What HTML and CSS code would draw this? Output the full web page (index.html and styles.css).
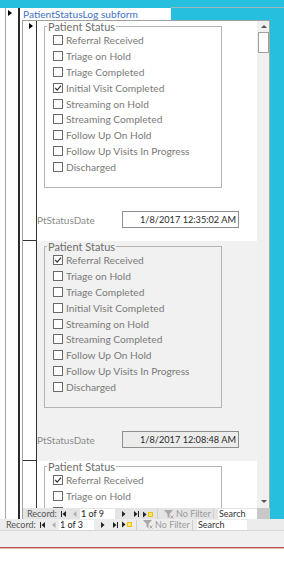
FILE: index.html
```html
<!DOCTYPE html>
<html>
<head>
<meta charset="utf-8">
<title>PatientStatusLog subform</title>
<link rel="stylesheet" href="styles.css">
</head>
<body>
<div class="app">
  <div class="topbar"><div class="topline"></div></div>
  <div class="main">
    <div class="selcol"><div class="selinner"><span class="arrow"></span></div></div>
    <div class="content">
      <div class="caprow"><div class="caption">PatientStatusLog subform</div></div>
      <div class="subform">
        <div class="sfbody">
          <div class="records">
            <div class="record">
              <div class="rsel"><span class="arrow"></span></div>
              <div class="detail">
                <fieldset class="group">
                  <legend>Patient Status</legend>
                  <div class="row"><span class="cb"></span><span>Referral Received</span></div>
                  <div class="row"><span class="cb"></span><span>Triage on Hold</span></div>
                  <div class="row"><span class="cb"></span><span>Triage Completed</span></div>
                  <div class="row"><span class="cb"><svg viewBox="0 0 8 8" width="8" height="8"><polyline points="1.2,4 3.2,6.2 7,1.6" fill="none" stroke="#333" stroke-width="1.2"/></svg></span><span>Initial Visit Completed</span></div>
                  <div class="row"><span class="cb"></span><span>Streaming on Hold</span></div>
                  <div class="row"><span class="cb"></span><span>Streaming Completed</span></div>
                  <div class="row"><span class="cb"></span><span>Follow Up On Hold</span></div>
                  <div class="row"><span class="cb"></span><span>Follow Up Visits In Progress</span></div>
                  <div class="row"><span class="cb"></span><span>Discharged</span></div>
                </fieldset>
                <div class="daterow"><span class="dlabel">PtStatusDate</span><span class="dbox">1/8/2017 12:35:02 AM</span></div>
              </div>
            </div>
            <div class="record">
              <div class="rsel"></div>
              <div class="detail alt">
                <fieldset class="group">
                  <legend>Patient Status</legend>
                  <div class="row"><span class="cb"><svg viewBox="0 0 8 8" width="8" height="8"><polyline points="1.2,4 3.2,6.2 7,1.6" fill="none" stroke="#333" stroke-width="1.2"/></svg></span><span>Referral Received</span></div>
                  <div class="row"><span class="cb"></span><span>Triage on Hold</span></div>
                  <div class="row"><span class="cb"></span><span>Triage Completed</span></div>
                  <div class="row"><span class="cb"></span><span>Initial Visit Completed</span></div>
                  <div class="row"><span class="cb"></span><span>Streaming on Hold</span></div>
                  <div class="row"><span class="cb"></span><span>Streaming Completed</span></div>
                  <div class="row"><span class="cb"></span><span>Follow Up On Hold</span></div>
                  <div class="row"><span class="cb"></span><span>Follow Up Visits In Progress</span></div>
                  <div class="row"><span class="cb"></span><span>Discharged</span></div>
                </fieldset>
                <div class="daterow"><span class="dlabel">PtStatusDate</span><span class="dbox grey">1/8/2017 12:08:48 AM</span></div>
              </div>
            </div>
            <div class="record">
              <div class="rsel"></div>
              <div class="detail">
                <fieldset class="group">
                  <legend>Patient Status</legend>
                  <div class="row"><span class="cb"><svg viewBox="0 0 8 8" width="8" height="8"><polyline points="1.2,4 3.2,6.2 7,1.6" fill="none" stroke="#333" stroke-width="1.2"/></svg></span><span>Referral Received</span></div>
                  <div class="row"><span class="cb"></span><span>Triage on Hold</span></div>
                  <div class="row"><span class="cb"></span><span>Triage Completed</span></div>
                  <div class="row"><span class="cb"></span><span>Initial Visit Completed</span></div>
                  <div class="row"><span class="cb"></span><span>Streaming on Hold</span></div>
                  <div class="row"><span class="cb"></span><span>Streaming Completed</span></div>
                  <div class="row"><span class="cb"></span><span>Follow Up On Hold</span></div>
                  <div class="row"><span class="cb"></span><span>Follow Up Visits In Progress</span></div>
                  <div class="row"><span class="cb"></span><span>Discharged</span></div>
                </fieldset>
                <div class="daterow"><span class="dlabel">PtStatusDate</span><span class="dbox"></span></div>
              </div>
            </div>
          </div>
          <div class="vscroll">
            <div class="sbtn"><span class="tri-up"></span></div>
            <div class="thumb"></div>
            <div class="track"></div>
            <div class="sbtn"><span class="tri-down"></span></div>
          </div>
        </div>
        <div class="navwrap">
          <div class="nav nav-inner">
            <span class="nlabel">Record:</span>
            <span class="ico first"><svg viewBox="0 0 5 6" width="5" height="6"><rect x="0" y="0" width="1" height="6" fill="#222"/><polygon points="5,0 1.5,3 5,6" fill="#222"/></svg></span>
            <span class="ico prev"><svg viewBox="0 0 4 6" width="4" height="6"><polygon points="3.5,0 0,3 3.5,6" fill="#b0b0b0"/></svg></span>
            <span class="nbox">1 of 9</span>
            <span class="ico next"><svg viewBox="0 0 4 6" width="4" height="6"><polygon points="0,0 3.5,3 0,6" fill="#222"/></svg></span>
            <span class="ico last"><svg viewBox="0 0 5 6" width="5" height="6"><polygon points="0,0 3.5,3 0,6" fill="#222"/><rect x="4" y="0" width="1" height="6" fill="#222"/></svg></span>
            <span class="ico new"><svg viewBox="0 0 10 7" width="10" height="7"><polygon points="0,0.5 3.5,3.5 0,6.5" fill="#222"/><rect x="5" y="1" width="5" height="5" fill="#f2c200"/><rect x="6" y="2" width="3" height="3" fill="#ffe680"/></svg></span>
            <span class="nsep"></span>
            <span class="ico funnel"><svg viewBox="0 0 10 9" width="10" height="9"><polygon points="0,0 9,0 5.5,4 5.5,8 3.5,7 3.5,4" fill="#a8a8a8"/><path d="M6.5,5.5 L9.5,8.5 M9.5,5.5 L6.5,8.5" stroke="#c0a0a0" stroke-width="1"/></svg></span>
            <span class="nfilter">No Filter</span>
            <span class="nsep"></span>
            <span class="nsearch">Search</span>
          </div>
          <div class="corner"></div>
        </div>
      </div>
    </div>
    <div class="cyan"></div>
  </div>
  <div class="nav nav-outer">
    <span class="nlabel">Record:</span>
    <span class="ico first"><svg viewBox="0 0 5 6" width="5" height="6"><rect x="0" y="0" width="1" height="6" fill="#222"/><polygon points="5,0 1.5,3 5,6" fill="#222"/></svg></span>
    <span class="ico prev"><svg viewBox="0 0 4 6" width="4" height="6"><polygon points="3.5,0 0,3 3.5,6" fill="#b0b0b0"/></svg></span>
    <span class="nbox">1 of 3</span>
    <span class="ico next"><svg viewBox="0 0 4 6" width="4" height="6"><polygon points="0,0 3.5,3 0,6" fill="#222"/></svg></span>
    <span class="ico last"><svg viewBox="0 0 5 6" width="5" height="6"><polygon points="0,0 3.5,3 0,6" fill="#222"/><rect x="4" y="0" width="1" height="6" fill="#222"/></svg></span>
    <span class="ico new"><svg viewBox="0 0 10 7" width="10" height="7"><polygon points="0,0.5 3.5,3.5 0,6.5" fill="#222"/><rect x="5" y="1" width="5" height="5" fill="#f2c200"/><rect x="6" y="2" width="3" height="3" fill="#ffe680"/></svg></span>
    <span class="nsep"></span>
    <span class="ico funnel"><svg viewBox="0 0 10 9" width="10" height="9"><polygon points="0,0 9,0 5.5,4 5.5,8 3.5,7 3.5,4" fill="#a8a8a8"/><path d="M6.5,5.5 L9.5,8.5 M9.5,5.5 L6.5,8.5" stroke="#c0a0a0" stroke-width="1"/></svg></span>
    <span class="nfilter">No Filter</span>
    <span class="nsep"></span>
    <span class="nsearch">Search</span>
  </div>
  <div class="status"></div>
  <div class="redline"></div>
  <div class="foot"></div>
</div>
</body>
</html>
```

FILE: styles.css
```css
* { box-sizing: border-box; margin: 0; padding: 0; }
html, body { width: 284px; height: 566px; overflow: hidden; }
body { background: #fff; font-family: Lato, "Open Sans", sans-serif; }

.app { width: 284px; height: 566px; display: flex; flex-direction: column; background: #26bfdd; }

.topbar { height: 8px; flex: none; display: flex; flex-direction: column; justify-content: flex-end; }
.topline { height: 1px; margin-left: 171px; background: #9fb6bc; }

.main { height: 511px; flex: none; display: grid; grid-template-columns: 22px 248px 14px; }

.selcol { background: #fff; padding-left: 5px; }
.selinner { height: 100%; width: 15px; border-left: 1px solid #a6a6a6; border-right: 2px solid #2a2a2a; padding: 2px 0 0 2px; }

.arrow { display: block; width: 0; height: 0; border-left: 4px solid #000; border-top: 3px solid transparent; border-bottom: 3px solid transparent; }

.content { display: flex; flex-direction: column; }
.caprow { height: 12px; flex: none; }
.caption { width: 149px; height: 12px; background: #fff; color: #4472c4; font-size: 10.2px; line-height: 12px; padding-left: 1px; white-space: nowrap; }

.subform { height: 499px; flex: none; border-left: 1px solid #a0a0a0; border-top: 1px solid #a0a0a0; display: flex; flex-direction: column; background: #fff; }
.sfbody { height: 487px; flex: none; display: flex; }
.records { width: 234px; height: 487px; overflow: hidden; }

.record { height: 220px; display: grid; grid-template-columns: 14px 220px; overflow: hidden; }
.rsel { border-right: 1px solid #333; border-bottom: 1px solid #333; padding: 2px 0 0 6px; background: #fff; }
.detail { background: #fff; padding-left: 7px; }
.detail.alt { background: #f1f1f1; }

.group { width: 178px; border: 1px solid #b4b4b4; padding: 0 0 12px 2px; }
.group legend { padding: 0 1px; font-size: 11px; line-height: 11px; color: #6e6e6e; }
.row { height: 15.9px; display: flex; align-items: center; padding-left: 6px; font-size: 10.2px; color: #7a7a7a; white-space: nowrap; }
.cb { width: 10px; height: 10px; border: 1px solid #6a6a6a; background: #fff; margin-right: 3px; display: flex; align-items: center; justify-content: center; flex: none; }
.cb svg { display: block; }

.daterow { margin-top: 23px; margin-left: -7px; height: 17px; display: flex; align-items: center; }
.dlabel { width: 85px; font-size: 10px; color: #8c8c8c; }
.dbox { width: 117px; height: 17px; border: 1px solid #8e8e8e; background: #fff; text-align: right; padding-right: 2px; font-size: 9.2px; line-height: 15px; color: #2a2a2a; white-space: nowrap; }
.dbox.grey { background: #ececec; }

.vscroll { width: 13px; background: #f0f0f0; border-right: 1px solid #a8a8a8; display: flex; flex-direction: column; padding-left: 1px; }
.sbtn { height: 11px; flex: none; display: flex; align-items: center; justify-content: center; }
.sbtn:last-child { margin-bottom: 1px; }
.tri-up { width: 0; height: 0; border-left: 3px solid transparent; border-right: 3px solid transparent; border-bottom: 3px solid #555; }
.tri-down { width: 0; height: 0; border-left: 3px solid transparent; border-right: 3px solid transparent; border-top: 3px solid #555; }
.thumb { height: 21px; flex: none; background: #fff; border: 1px solid #a0a0a0; }
.track { flex: 1; }

.navwrap { height: 11px; flex: none; display: flex; }
.corner { width: 13px; background: #c9c9c9; }

.nav { display: flex; align-items: center; white-space: nowrap; overflow: hidden; font-size: 9px; line-height: 10px; }
.nav-inner { width: 234px; height: 11px; background: #e4e4e4; padding-left: 4px; padding-top: 1px; }
.nav-outer { height: 12px; flex: none; background: #ececec; padding-left: 6px; border-bottom: 1px solid #d6d6d6; }

.nlabel { width: 34px; height: 10px; flex: none; color: #555; }
.ico { display: flex; align-items: center; flex: none; }
.ico svg { display: block; }
.first { width: 12px; }
.prev { width: 7px; }
.nbox { width: 35px; height: 10px; flex: none; background: #fff; color: #222; padding-left: 1px; margin-right: 7px; }
.next { width: 12px; }
.last { width: 9px; }
.new { width: 14px; }
.nsep { width: 1px; height: 10px; background: #cfcfcf; flex: none; margin-right: 6px; }
.funnel { width: 12px; }
.nfilter { width: 37px; height: 10px; flex: none; color: #9a9a9a; }
.nfilter + .nsep { margin-right: 4px; }
.nsearch { width: 50px; height: 10px; flex: none; background: #fff; color: #333; padding-left: 1px; }

.cyan { background: #26bfdd; }

.status { height: 16px; flex: none; background: #f0f0f0; }
.redline { height: 2px; flex: none; background: #b9534f; border-bottom: 1px solid #e4b6b4; }
.foot { flex: 1; background: #fff; }
```
